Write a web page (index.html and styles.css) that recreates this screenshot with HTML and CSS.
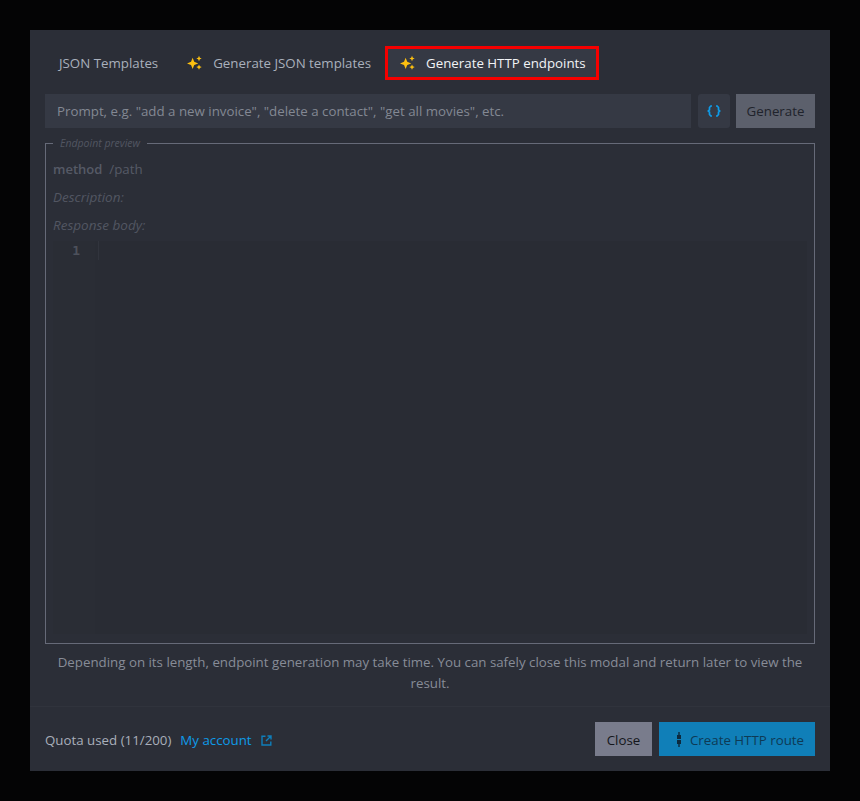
FILE: index.html
```html
<!DOCTYPE html>
<html lang="en">
<head>
<meta charset="utf-8">
<title>Generate HTTP endpoints</title>
<link rel="stylesheet" href="styles.css">
</head>
<body>
<svg class="defs" width="0" height="0" aria-hidden="true"><defs>
<symbol id="spark" viewBox="0 0 16 16"><path fill="#fdc010" d="M6 3 7.700 7.300 12 9 7.700 10.700 6 15 4.300 10.700 0 9 4.300 7.300zM12.800 .8l.9 2 2 .9-2 .9-.9 2-.9-2-2-.9 2-.9zM12.800 10l.9 2 2 .9-2 .9-.9 2-.9-2-2-.9 2-.9z"/></symbol>
</defs></svg>
<main class="modal">
  <nav class="tabs">
    <div class="tab tab-plain">JSON Templates</div>
    <div class="tab"><svg class="spark"><use href="#spark"/></svg>Generate JSON templates</div>
    <div class="tab tab-active"><svg class="spark"><use href="#spark"/></svg>Generate HTTP endpoints</div>
  </nav>
  <div class="prompt-row">
    <div class="prompt">Prompt, e.g. "add a new invoice", "delete a contact", "get all movies", etc.</div>
    <div class="braces"><svg width="14" height="12" viewBox="0 0 14 12"><path fill="none" stroke="#0e9be8" stroke-width="1.700" d="M5 1H3.800L2.500 2.500V4.800L1.300 6 2.500 7.200V9.500L3.800 11H5M9 1H10.200L11.500 2.500V4.800L12.700 6 11.500 7.200V9.500L10.200 11H9"/></svg></div>
    <div class="btn btn-generate">Generate</div>
  </div>
  <fieldset class="preview">
    <legend>Endpoint preview</legend>
    <div class="route"><strong>method</strong><span>/path</span></div>
    <div class="label label-desc">Description:</div>
    <div class="label label-body">Response body:</div>
    <div class="editor">
      <div class="gutter">1</div>
      <div class="code"><div class="cursor-line"></div></div>
    </div>
  </fieldset>
  <p class="note">Depending on its length, endpoint generation may take time. You can safely close this modal and return later to view the result.</p>
  <footer class="footer">
    <div class="quota">Quota used (11/200)<a class="account">My account<svg width="11" height="11" viewBox="0 0 11 11"><path fill="none" stroke="#0f7fbb" stroke-width="1.400" d="M4.500 1.200H1V10H9.800V6.500M6.500 1H10V4.500M10 1 5 6"/></svg></a></div>
    <div class="actions">
      <div class="btn btn-close">Close</div>
      <div class="btn btn-create"><svg width="6" height="15" viewBox="0 0 6 15"><path fill="#0d2a3e" d="M2.300 0h1.400v3H5V7H1V3h1.300zM1 8h4v4H3.700v3H2.300v-3H1z"/></svg>Create HTTP route</div>
    </div>
  </footer>
</main>
</body>
</html>
```
FILE: styles.css
```css
* { box-sizing: border-box; }
html, body { height: 100%; }
body {
  margin: 0;
  padding: 30px;
  background: #040405;
  font-family: "Open Sans", "Noto Sans", sans-serif;
  font-size: 13.3px;
  color: #a7adb8;
  overflow: hidden;
}
.defs { position: absolute; }
.modal {
  width: 800px;
  height: 741px;
  background: #2b2e37;
  padding: 16px 15px 15px;
  display: flex;
  flex-direction: column;
}
.tabs { display: flex; height: 34px; align-items: stretch; }
.tab {
  display: flex;
  align-items: center;
  padding: 0 11px 0 12px;
  color: #a9b0bc;
  border: 3px solid transparent;
  white-space: nowrap;
}
.tab-plain { padding: 0 11px; }
.tab-active { color: #f1f3f6; background: #353944; border-color: #f50000; padding-right: 10px; }
.spark { width: 15px; height: 15px; margin-right: 11px; flex: none; }
.prompt-row { display: flex; height: 34px; margin-top: 14px; }
.prompt {
  width: 646px;
  background: #353944;
  padding-left: 12px;
  line-height: 34px;
  color: #838893;
}
.braces {
  width: 32px;
  margin-left: 7px;
  background: #353944;
  border-radius: 3px;
  display: flex;
  align-items: center;
  justify-content: center;
}
.btn { display: flex; align-items: center; justify-content: center; height: 34px; padding-top: 1px; }
.btn-generate { width: 79px; margin-left: 6px; background: #5c606c; color: #20232b; padding-top: 0; }
.preview {
  margin: 9px 0 0;
  padding: 0 7px;
  height: 508px;
  min-width: 0;
  border: 1px solid #666a78;
  display: block;
}
.preview legend {
  margin-left: 0;
  padding: 0 7px 2px;
  font-size: 10.5px;
  line-height: 12px;
  font-style: italic;
  color: #525662;
}
.route { display: flex; gap: 7px; height: 20px; line-height: 20px; margin-top: 8px; color: #565a66; }
.route strong { font-weight: 600; font-size: 13px; }
.label { font-style: italic; font-size: 13.5px; color: #525662; height: 20px; line-height: 20px; margin-top: 8px; }
.editor {
  display: flex;
  height: 393px;
  margin-top: 6px;
  background: #292c34;
  font-family: "DejaVu Sans Mono", monospace;
}
.gutter { width: 42px; padding: 2px 15px 0 0; text-align: right; line-height: 16px; font-size: 13px; font-weight: 700; color: #4d515c; background: #2a2d35; }
.code { flex: 1; padding-left: 3px; }
.cursor-line { height: 19px; border-left: 1px solid #31343d; }
.note { margin: 8px 0 0; text-align: center; line-height: 21px; color: #878c97; padding: 0; }
.footer {
  margin: 12px -15px 0;
  padding: 15px 15px 0;
  border-top: 1px solid #30333c;
  display: flex;
  justify-content: space-between;
  align-items: center;
}
.quota { color: #a9afba; padding-top: 2px; }
.account { color: #0e9be8; margin-left: 9px; display: inline-flex; align-items: center; gap: 9px; }
.actions { display: flex; gap: 7px; }
.btn-close { width: 57px; background: #797c8c; color: #14161b; }
.btn-create { width: 156px; background: #107fb8; color: #0e3a55; gap: 8px; padding-left: 6px; }
```
